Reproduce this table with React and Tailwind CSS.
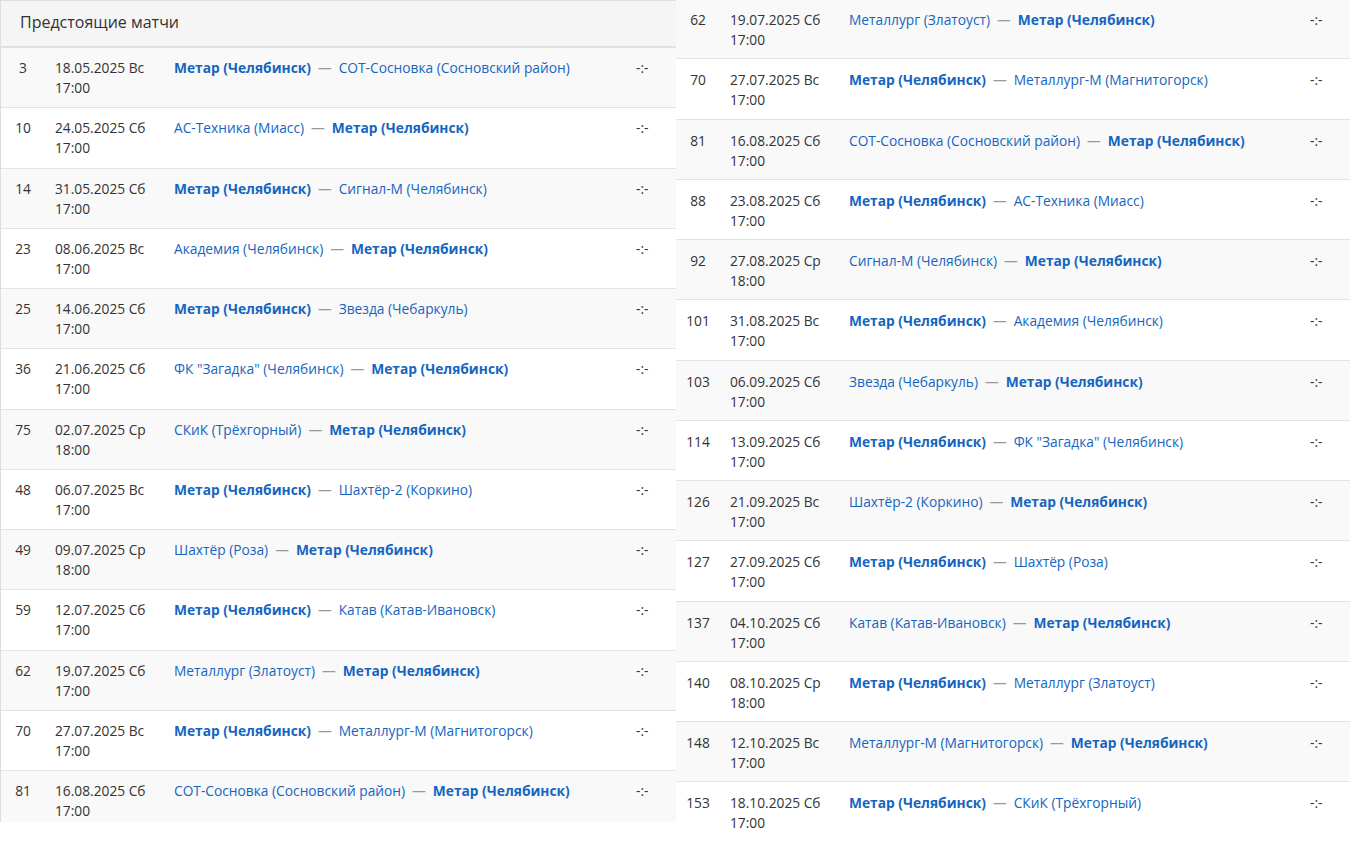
import React from "react";

const M = "Метар (Челябинск)";
const all = [
  ["3", "18.05.2025 Вс", "17:00", M, "СОТ-Сосновка (Сосновский район)"],
  ["10", "24.05.2025 Сб", "17:00", "АС-Техника (Миасс)", M],
  ["14", "31.05.2025 Сб", "17:00", M, "Сигнал-М (Челябинск)"],
  ["23", "08.06.2025 Вс", "17:00", "Академия (Челябинск)", M],
  ["25", "14.06.2025 Сб", "17:00", M, "Звезда (Чебаркуль)"],
  ["36", "21.06.2025 Сб", "17:00", "ФК \"Загадка\" (Челябинск)", M],
  ["75", "02.07.2025 Ср", "18:00", "СКиК (Трёхгорный)", M],
  ["48", "06.07.2025 Вс", "17:00", M, "Шахтёр-2 (Коркино)"],
  ["49", "09.07.2025 Ср", "18:00", "Шахтёр (Роза)", M],
  ["59", "12.07.2025 Сб", "17:00", M, "Катав (Катав-Ивановск)"],
  ["62", "19.07.2025 Сб", "17:00", "Металлург (Златоуст)", M],
  ["70", "27.07.2025 Вс", "17:00", M, "Металлург-М (Магнитогорск)"],
  ["81", "16.08.2025 Сб", "17:00", "СОТ-Сосновка (Сосновский район)", M],
  ["88", "23.08.2025 Сб", "17:00", M, "АС-Техника (Миасс)"],
  ["92", "27.08.2025 Ср", "18:00", "Сигнал-М (Челябинск)", M],
  ["101", "31.08.2025 Вс", "17:00", M, "Академия (Челябинск)"],
  ["103", "06.09.2025 Сб", "17:00", "Звезда (Чебаркуль)", M],
  ["114", "13.09.2025 Сб", "17:00", M, "ФК \"Загадка\" (Челябинск)"],
  ["126", "21.09.2025 Вс", "17:00", "Шахтёр-2 (Коркино)", M],
  ["127", "27.09.2025 Сб", "17:00", M, "Шахтёр (Роза)"],
  ["137", "04.10.2025 Сб", "17:00", "Катав (Катав-Ивановск)", M],
  ["140", "08.10.2025 Ср", "18:00", M, "Металлург (Златоуст)"],
  ["148", "12.10.2025 Вс", "17:00", "Металлург-М (Магнитогорск)", M],
  ["153", "18.10.2025 Сб", "17:00", M, "СКиК (Трёхгорный)"],
];

const left = all.slice(0, 13);
const right = all.slice(10);

function Team({ name }) {
  return name === M ? (
    <span className="font-bold text-[#1565c0]">{name}</span>
  ) : (
    <span className="text-[#1565c0]">{name}</span>
  );
}

function Row({ r, i, pad }) {
  return (
    <div
      className={`flex h-[60.25px] shrink-0 border-b border-[#e3e3e3] text-[13.75px] leading-[20px] text-[#333] ${pad} ${
        i % 2 === 0 ? "bg-[#f9f9f9]" : "bg-white"
      }`}
    >
      <div className="w-[44px] text-center">{r[0]}</div>
      <div className="w-[129px] pl-[10px]">
        <div>{r[1]}</div>
        <div>{r[2]}</div>
      </div>
      <div className="flex-1">
        <Team name={r[3]} />
        <span className="mx-[7px] text-[#999]">—</span>
        <Team name={r[4]} />
      </div>
      <div className="w-[40px]">-:-</div>
    </div>
  );
}

export default function App() {
  return (
    <div
      className="flex h-[854px] w-[1350px] items-start overflow-hidden bg-white"
      style={{ fontFamily: '"Open Sans", "Noto Sans", sans-serif' }}
    >
      <div className="flex h-[822px] w-[676px] shrink-0 flex-col overflow-hidden border-l border-t border-[#dedede]">
        <div className="h-[47px] shrink-0 border-b-2 border-[#e0e0e0] bg-[#f5f5f5] px-[19px] pt-[9px] text-[16px] leading-[24px] text-[#333]">
          Предстоящие матчи
        </div>
        {left.map((r, i) => (
          <Row key={r[0]} r={r} i={i} pad="pt-[10px]" />
        ))}
      </div>
      <div className="flex h-[834px] w-[674px] shrink-0 flex-col overflow-hidden">
        <div className="mt-[-1px] flex flex-col">
          {right.map((r, i) => (
            <Row key={r[0]} r={r} i={i} pad="pt-[11px]" />
          ))}
        </div>
      </div>
    </div>
  );
}
